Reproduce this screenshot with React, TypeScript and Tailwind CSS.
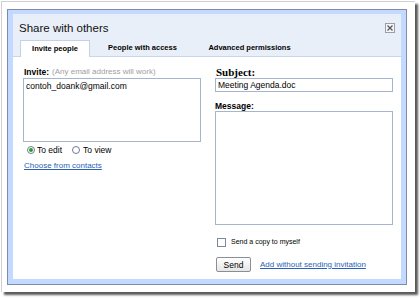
import React from "react";

export default function App() {
  return (
    <div className="w-[420px] h-[298px] bg-white font-['Liberation_Sans',Arial,sans-serif] text-black overflow-hidden">
      <div className="ml-[1px] mt-[1px] w-[414px] h-[291px] bg-white border-l border-t border-[#cfcfcf] shadow-[3px_3px_2px_rgba(0,0,0,0.65)] pl-[5px] pt-[7px]">
        {/* dialog */}
        <div className="w-[400px] h-[276px] border border-[#7f8da3] flex">
          <div className="flex-1 border-[5px] border-[#c3d9ff] border-t-[4px] flex flex-col bg-white">
            {/* header */}
            <div className="bg-[#e8eff9] h-[43px] flex flex-col">
              <div className="h-[27px] flex items-center justify-between pl-[6px] pr-[6px]">
                <span className="text-[11.5px] leading-[14px] mt-[2px] text-[#111]">Share with others</span>
                <span className="w-[10px] h-[10px] mt-[1px] border border-[#9aa0a8] bg-[#f3f5f8] flex items-center justify-center">
                  <svg width="6" height="6" viewBox="0 0 6 6">
                    <path d="M0.5 0.5 L5.5 5.5 M5.5 0.5 L0.5 5.5" stroke="#555" strokeWidth="1.2" />
                  </svg>
                </span>
              </div>
              <div className="flex-1 flex items-end pl-[7px] border-b border-[#c9d6ea]">
                <div className="w-[70px] h-[16px] bg-white border border-b-0 border-[#c3d2e8] flex items-center justify-center text-[7.5px] font-bold leading-[10px] -mb-[1px] h-[17px]">
                  Invite people
                </div>
                <div className="w-[105px] h-[16px] flex items-center justify-center text-[7.5px] font-bold leading-[10px]">
                  People with access
                </div>
                <div className="w-[109px] h-[16px] flex items-center justify-center text-[7.5px] font-bold leading-[10px]">
                  Advanced permissions
                </div>
              </div>
            </div>
            {/* content */}
            <div className="flex-1 flex pl-[10px] pt-[10px] gap-[14px]">
              {/* left column */}
              <div className="w-[178px] flex flex-col">
                <div className="h-[10px] flex items-center">
                  <span className="text-[8.5px] font-bold leading-[10px] ml-[1px]">Invite:</span>
                  <span className="text-[8px] leading-[10px] text-[#a0a0a0] ml-[3px]">(Any email address will work)</span>
                </div>
                <div className="mt-[1px] h-[64px] border border-[#a4b5cc] pl-[2px] pt-[2px] text-[8.5px] leading-[10px]">
                  contoh_doank@gmail.com
                </div>
                <div className="mt-[3px] h-[10px] flex items-center pl-[4px] text-[8.5px] leading-[10px]">
                  <span className="w-[8px] h-[8px] rounded-full border border-[#6c7c92] bg-white flex items-center justify-center">
                    <span className="w-[4px] h-[4px] rounded-full bg-[#2d9a2d]" />
                  </span>
                  <span className="ml-[2px]">To edit</span>
                  <span className="ml-[10px] w-[8px] h-[8px] rounded-full border border-[#6c7c92] bg-white" />
                  <span className="ml-[3px]">To view</span>
                </div>
                <div className="mt-[6px] h-[10px] flex items-center ml-[1px]">
                  <span className="text-[8px] leading-[10px] text-[#2b5fb8] underline">Choose from contacts</span>
                </div>
              </div>
              {/* right column */}
              <div className="w-[178px] flex flex-col">
                <div className="h-[10px] flex items-center">
                  <span className="font-['Liberation_Serif',serif] text-[11px] font-bold leading-[10px] ml-[1px]">Subject:</span>
                </div>
                <div className="mt-[1px] h-[14px] border border-[#a4b5cc] pl-[2px] flex items-center text-[8.5px] leading-[10px]">
                  Meeting Agenda.doc
                </div>
                <div className="mt-[9px] h-[10px] flex items-center">
                  <span className="text-[8.5px] font-bold leading-[10px]">Message:</span>
                </div>
                <div className="h-[114px] border border-[#a4b5cc]" />
                <div className="mt-[12px] h-[10px] flex items-center pl-[2px]">
                  <span className="w-[9px] h-[9px] border border-[#7c8798] bg-white" />
                  <span className="ml-[5px] text-[7px] leading-[10px]">Send a copy to myself</span>
                </div>
                <div className="mt-[10px] h-[15px] flex items-center">
                  <span className="ml-[1px] w-[35px] h-[15px] rounded-[2px] border border-[#8a8f96] bg-gradient-to-b from-white to-[#e6e6e6] flex items-center justify-center text-[8.5px] leading-[10px]">
                    Send
                  </span>
                  <span className="ml-[9px] text-[8px] leading-[10px] text-[#2b5fb8] underline">Add without sending invitation</span>
                </div>
              </div>
            </div>
          </div>
        </div>
      </div>
    </div>
  );
}
